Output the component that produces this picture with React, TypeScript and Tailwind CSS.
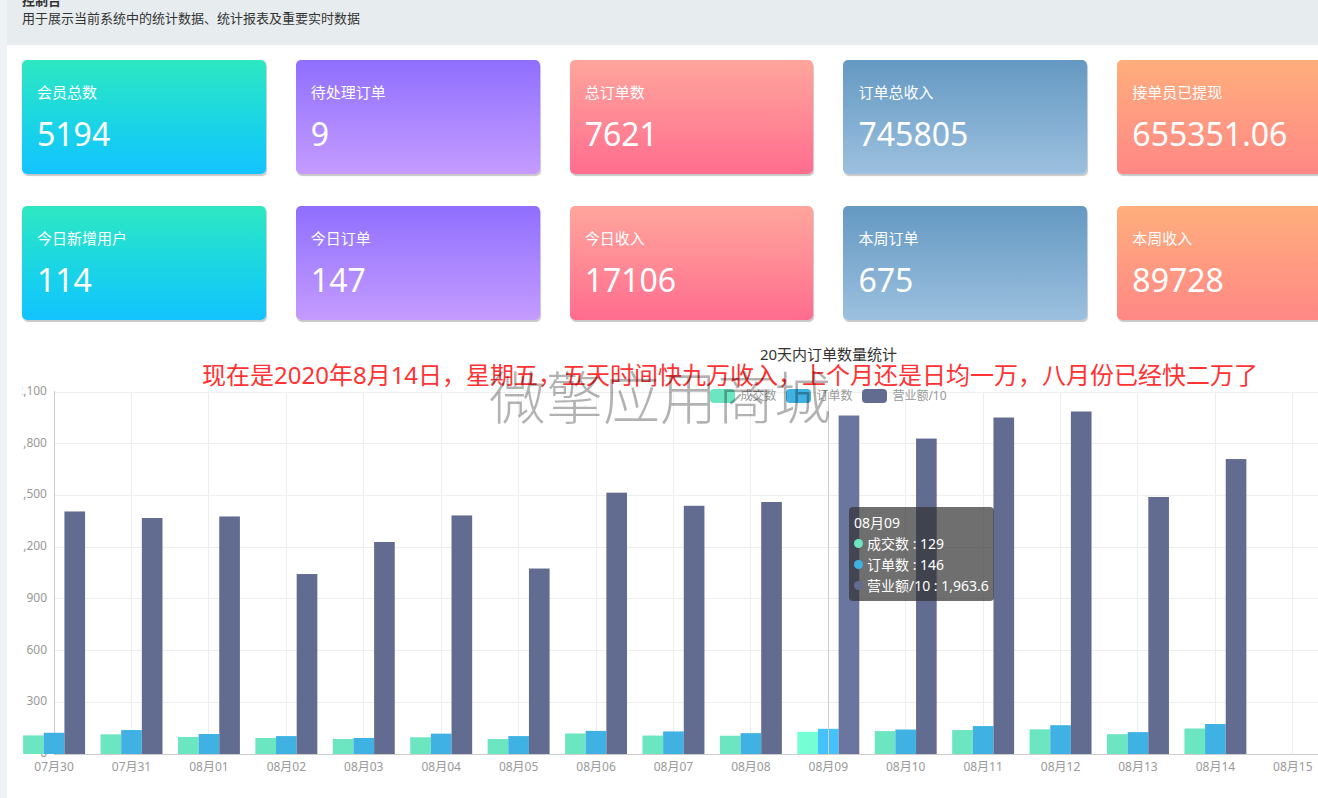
const stats = [
  [
    { label: '会员总数', value: '5194' },
    { label: '待处理订单', value: '9' },
    { label: '总订单数', value: '7621' },
    { label: '订单总收入', value: '745805' },
    { label: '接单员已提现', value: '655351.06' }
  ],
  [
    { label: '今日新增用户', value: '114' },
    { label: '今日订单', value: '147' },
    { label: '今日收入', value: '17106' },
    { label: '本周订单', value: '675' },
    { label: '本周收入', value: '89728' }
  ]
];

const cardColors = [
  'from-[#2ee8c1] to-[#14c3ff]',
  'from-[#906eff] to-[#c59bff]',
  'from-[#ffa59c] to-[#ff6c8e]',
  'from-[#6499c2] to-[#9cc0df]',
  'from-[#ffae7c] to-[#ff8785]'
];

const series = [
  { name: '成交数', color: '#6be6c1', active: '#75fdd4', swatch: 'bg-[#6be6c1]' },
  { name: '订单数', color: '#3fb1e3', active: '#45c2f9', swatch: 'bg-[#3fb1e3]' },
  { name: '营业额/10', color: '#626c91', active: '#6b769f', swatch: 'bg-[#626c91]' }
];

// date, deals, orders, revenue / 10
const days: { date: string; values: number[] }[] = [
  { date: '07月30', values: [108, 123, 1407] },
  { date: '07月31', values: [114, 139, 1369] },
  { date: '08月01', values: [99, 116, 1378] },
  { date: '08月02', values: [93, 104, 1044] },
  { date: '08月03', values: [87, 93, 1230] },
  { date: '08月04', values: [97, 118, 1384] },
  { date: '08月05', values: [87, 104, 1076] },
  { date: '08月06', values: [119, 134, 1516] },
  { date: '08月07', values: [107, 131, 1440] },
  { date: '08月08', values: [106, 121, 1462] },
  { date: '08月09', values: [129, 146, 1963.6] },
  { date: '08月10', values: [133, 142, 1830] },
  { date: '08月11', values: [139, 162, 1952] },
  { date: '08月12', values: [143, 167, 1987] },
  { date: '08月13', values: [115, 127, 1491] },
  { date: '08月14', values: [148, 174, 1711] },
  { date: '08月15', values: [] },
  { date: '08月16', values: [] },
  { date: '08月17', values: [] },
  { date: '08月18', values: [] }
];

const ticks = [0, 300, 600, 900, 1200, 1500, 1800, 2100];
const activeDay = 10;

const plot = { left: 32.1, top: 28, height: 362, step: 77.42, bar: 20.65 };
const bottom = plot.top + plot.height;
const right = plot.left + plot.step * (days.length - 1);

const xOf = (i: number) => plot.left + plot.step * i;
const yOf = (v: number) => bottom - (v / 2100) * plot.height;
const crisp = (n: number) => Math.floor(n) + 0.5;

function StatCard({ label, value, color }: { label: string; value: string; color: string }) {
  return (
    <div className={`rounded-[5px] bg-linear-to-b p-[15px] text-white shadow-[1px_2px_1px_rgba(0,0,0,0.22)] ${color}`}>
      <p className="mt-[7px] text-[15px] leading-5">{label}</p>
      <p className="mt-[10px] mb-[3px] text-[32px] leading-[44px]">{value}</p>
    </div>
  );
}

function Chart() {
  return (
    <svg className="block h-[420px] w-full overflow-hidden" role="img" aria-label="20天内订单数量统计">
      {ticks.map((t) => (
        <g key={t}>
          <line x1={plot.left} x2={right} y1={crisp(yOf(t))} y2={crisp(yOf(t))} stroke="#eeeeee" />
          <text x={25} y={yOf(t) + 3} textAnchor="end" fontSize={12} fill="#999999">
            {t.toLocaleString('en-US')}
          </text>
        </g>
      ))}
      {days.map((d, i) => (
        <g key={d.date}>
          <line x1={crisp(xOf(i))} x2={crisp(xOf(i))} y1={plot.top} y2={bottom} stroke="#eeeeee" />
          <text x={xOf(i)} y={bottom + 17} textAnchor="middle" fontSize={12} fill="#999999">
            {d.date}
          </text>
        </g>
      ))}
      <line x1={crisp(plot.left)} x2={crisp(plot.left)} y1={plot.top - 1} y2={bottom} stroke="#cccccc" />
      {days.map((d, i) =>
        d.values.map((v, s) => (
          <rect
            key={`${d.date}-${s}`}
            x={xOf(i) - plot.bar * 1.5 + plot.bar * s}
            y={yOf(v)}
            width={plot.bar}
            height={bottom - yOf(v)}
            fill={i === activeDay ? series[s].active : series[s].color}
          />
        ))
      )}
      <line x1={plot.left} x2={right} y1={crisp(bottom)} y2={crisp(bottom)} stroke="#cccccc" />
      <line x1={crisp(xOf(activeDay))} x2={crisp(xOf(activeDay))} y1={plot.top} y2={bottom} stroke="#cccccc" />
    </svg>
  );
}

function Tooltip() {
  const day = days[activeDay];
  return (
    <div className="absolute top-[143px] left-[827px] rounded bg-[#323232]/70 p-[5px] text-sm leading-[21px] whitespace-nowrap text-white">
      <p>{day.date}</p>
      {series.map((s, i) => (
        <p key={s.name} className="flex items-center gap-1">
          <span className={`size-[9px] rounded-full ${s.swatch}`} />
          {s.name} : {day.values[i].toLocaleString('en-US')}
        </p>
      ))}
    </div>
  );
}

export default function App() {
  return (
    <div className="min-h-screen overflow-hidden bg-[#eef3f6] pl-[7px] font-['Noto_Sans','Noto_Sans_CJK_SC',sans-serif] text-[#333333]">
      <div className="min-h-screen min-w-[1643px] bg-white">
        <header className="flex h-[45px] flex-col justify-end overflow-hidden bg-[#e7ecef] px-[15px] pb-[18px] text-[13px] leading-[18px]">
          <h1 className="font-bold">控制台</h1>
          <p>用于展示当前系统中的统计数据、统计报表及重要实时数据</p>
        </header>

        <main className="px-[15px] pt-[15px]">
          <div className="flex flex-col gap-8">
            {stats.map((row, r) => (
              <div key={r} className="grid grid-cols-6 gap-[30px]">
                {row.map((s, i) => (
                  <StatCard key={s.label} label={s.label} value={s.value} color={cardColors[i]} />
                ))}
              </div>
            ))}
          </div>

          <section className="mt-6">
            <h2 className="text-center text-[15px] leading-5">20天内订单数量统计</h2>
            <div className="relative">
              <Chart />
              <ul className="absolute inset-x-0 top-[22px] flex justify-center gap-[10px] text-xs leading-5 text-[#999999]">
                {series.map((s) => (
                  <li key={s.name} className="flex items-center gap-[5px]">
                    <span className={`h-[14px] w-[25px] rounded ${s.swatch}`} />
                    {s.name}
                  </li>
                ))}
              </ul>
              <Tooltip />
              <p className="absolute -top-[5px] left-[180px] text-2xl leading-8 whitespace-nowrap text-[#ff3333]">
                现在是2020年8月14日，星期五，五天时间快九万收入，上个月还是日均一万，八月份已经快二万了
              </p>
              <p className="absolute -top-[2px] left-[467px] text-[57px] leading-[70px] font-light whitespace-nowrap text-black/30">
                微擎应用商城
              </p>
            </div>
          </section>
        </main>
      </div>
    </div>
  );
}
